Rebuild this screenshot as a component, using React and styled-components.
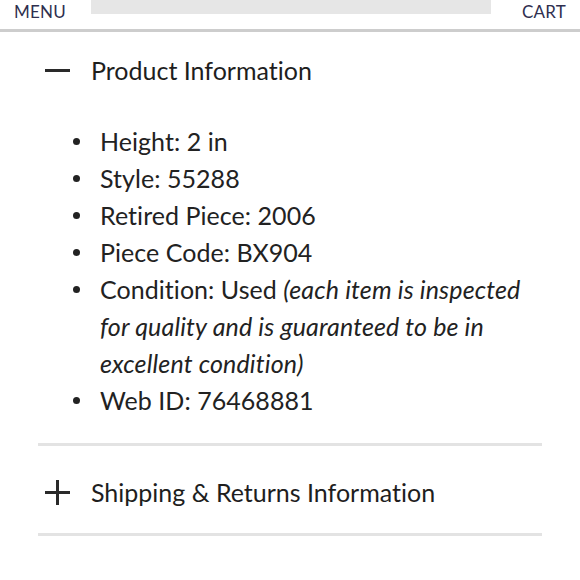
import React from "react";
import styled, { createGlobalStyle } from "styled-components";

const Global = createGlobalStyle`
  html, body { margin: 0; padding: 0; background: #fff; }
  body {
    font-family: Lato, "Open Sans", sans-serif;
    color: #222;
    font-variant-ligatures: no-common-ligatures;
    font-feature-settings: "liga" 0, "clig" 0;
  }
`;

const Page = styled.div`
  width: 580px;
  height: 580px;
  overflow: hidden;
  background: #fff;
`;

const Header = styled.header`
  height: 29px;
  border-bottom: 3px solid #cdcdcd;
  display: flex;
  align-items: flex-start;
  justify-content: space-between;
  padding: 0 14px;
  box-sizing: content-box;
`;

const NavLink = styled.span`
  font-size: 17px;
  line-height: 17px;
  margin-top: 3px;
  color: #2f2f4f;
  letter-spacing: 0.2px;
`;

const Search = styled.div`
  width: 400px;
  height: 14px;
  background: #e6e6e6;
  margin-left: 25px;
  margin-right: 30px;
`;

const Content = styled.main`
  padding: 0 38px;
`;

const Section = styled.section`
  border-bottom: ${(p) => (p.$divider ? "3px solid #e3e3e3" : "none")};
`;

const AccordionHead = styled.div`
  display: flex;
  align-items: center;
  gap: 21px;
  padding: ${(p) => p.$pad};
  padding-left: 7px;
`;

const Title = styled.h2`
  margin: 0;
  font-size: 25px;
  line-height: 40px;
  font-weight: 400;
  color: #1e1e1e;
`;

const Icon = styled.svg`
  width: 25px;
  height: 25px;
  flex: none;
`;

const List = styled.ul`
  margin: 33px 0 0;
  padding: 0 0 24px;
  list-style: none;
`;

const Item = styled.li`
  display: grid;
  grid-template-columns: 62px 1fr;
  font-size: 25px;
  line-height: 37px;
  color: #222;
`;

const Bullet = styled.span`
  display: flex;
  justify-content: flex-end;
  padding: 15px 20px 0 0;
  &::before {
    content: "";
    width: 7px;
    height: 7px;
    border-radius: 50%;
    background: #222;
  }
`;

const Text = styled.span`
  padding-right: 8px;
  letter-spacing: 0.05px;
`;

const Note = styled.em`
  font-style: italic;
  letter-spacing: 0.15px;
`;

const Minus = () => (
  <Icon viewBox="0 0 25 25">
    <rect x="0" y="11" width="25" height="3" fill="#2a2a2a" />
  </Icon>
);

const Plus = () => (
  <Icon viewBox="0 0 25 25">
    <rect x="0" y="11" width="25" height="3" fill="#2a2a2a" />
    <rect x="11" y="0" width="3" height="25" fill="#2a2a2a" />
  </Icon>
);

const details = [
  ["Height: 2 in"],
  ["Style: 55288"],
  ["Retired Piece: 2006"],
  ["Piece Code: BX904"],
  [
    "Condition: Used ",
    "(each item is inspected for quality and is guaranteed to be in excellent condition)",
  ],
  ["Web ID: 76468881"],
];

export default function App() {
  return (
    <Page>
      <Global />
      <Header>
        <NavLink>MENU</NavLink>
        <Search />
        <NavLink>CART</NavLink>
      </Header>
      <Content>
        <Section $divider>
          <AccordionHead $pad="18px 0 0">
            <Minus />
            <Title>Product Information</Title>
          </AccordionHead>
          <List>
            {details.map(([text, note], i) => (
              <Item key={i}>
                <Bullet />
                <Text>
                  {text}
                  {note && <Note>{note}</Note>}
                </Text>
              </Item>
            ))}
          </List>
        </Section>
        <Section $divider>
          <AccordionHead $pad="26px 0 21px">
            <Plus />
            <Title>Shipping &amp; Returns Information</Title>
          </AccordionHead>
        </Section>
      </Content>
    </Page>
  );
}
